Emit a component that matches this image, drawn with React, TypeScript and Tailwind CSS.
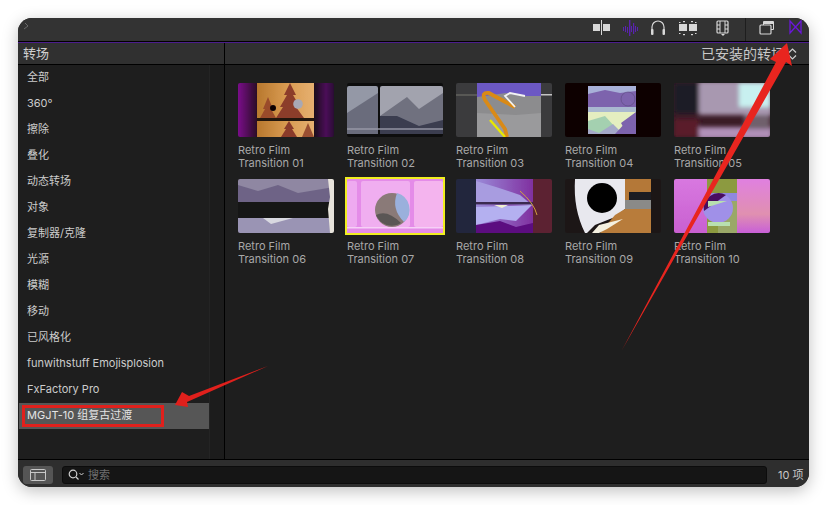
import React from "react";

const cats = ["全部","360°","擦除","叠化","动态转场","对象","复制器/克隆","光源","模糊","移动","已风格化","funwithstuff Emojisplosion","FxFactory Pro","MGJT-10 组复古过渡"];

const Svg = ({ children }: { children: React.ReactNode }) => (
  <svg viewBox="0 0 96 54" className="block w-full h-full" preserveAspectRatio="none">
    <defs><filter id="soft" x="-5%" y="-5%" width="110%" height="110%"><feGaussianBlur stdDeviation="0.45"/></filter></defs>
    <g filter="url(#soft)">{children}</g>
  </svg>
);

const T1 = () => (<Svg>
  <defs>
    <linearGradient id="a1" x1="0" x2="1"><stop offset="0" stopColor="#b8782e"/><stop offset=".5" stopColor="#d89a50"/><stop offset="1" stopColor="#e6b070"/></linearGradient>
    <linearGradient id="l1" x1="0" x2="1"><stop offset="0" stopColor="#7a0a8a"/><stop offset="1" stopColor="#2a0a26"/></linearGradient>
    <linearGradient id="r1" x1="0" x2="1"><stop offset="0" stopColor="#1a0a18"/><stop offset=".6" stopColor="#4a0a58"/><stop offset="1" stopColor="#2a0834"/></linearGradient>
  </defs>
  <rect width="96" height="54" fill="#2a0a30"/>
  <rect x="0" width="19" height="54" fill="url(#l1)"/><rect x="76" width="20" height="54" fill="url(#r1)"/>
  <rect x="19" width="57" height="54" fill="url(#a1)"/>
  <path d="M52 0 L58 12 L55 12 L62 24 L58 24 L66 35 L38 35 L45 24 L42 24 L49 12 L46 12Z" fill="#8c3c2c"/>
  <path d="M30 14 L35 26 L33 26 L38 35 L22 35 L27 26 L25 26Z" fill="#9a4c2c"/>
  <path d="M51 38 L56 46 L54 46 L59 54 L43 54 L48 46 L46 46Z" fill="#8a3a2c"/>
  <path d="M70 40 L76 54 L64 54Z" fill="#9a5030"/>
  <rect x="19" y="35" width="57" height="3" fill="#24120e"/>
  <circle cx="35" cy="25" r="3" fill="#0a0505"/><circle cx="60" cy="21" r="4.8" fill="#a8a8b4"/>
</Svg>);
const T2 = () => (<Svg>
  <rect width="96" height="54" fill="#0c0c10"/>
  <rect x="0" y="3" width="31" height="48" rx="2" fill="#9498a6"/><rect x="33" y="3" width="63" height="48" rx="2" fill="#a2a3ae"/>
  <path d="M0 30 L31 10 L31 51 L0 51Z" fill="#6a6c7c"/>
  <path d="M33 33 L60 14 L72 26 L96 10 L96 51 L33 51Z" fill="#70717f"/>
  <path d="M33 33 L50 33 L72 43 L96 37 L96 51 L33 51Z" fill="#3a3c50"/>
  <rect x="0" y="45" width="96" height="2" fill="#9a9aa8" opacity=".7"/>
</Svg>);
const T3 = () => (<Svg>
  <rect width="96" height="54" fill="#3b3b3d"/>
  <rect x="21" width="64" height="54" fill="#8c8c8e"/>
  <path d="M21 0 H85 V13 H66 L50 10 L21 14Z" fill="#6c58c4"/>
  <path d="M21 30 L60 32 L85 30 V54 H21Z" fill="#9a9a9c"/>
  <rect x="0" y="11.5" width="21" height="1" fill="#77776f"/>
  <rect x="85" y="11" width="11" height="1.5" fill="#c4c4c4"/>
  <path d="M59 24 Q40 14 33 10 Q25 9 29 17 L49 46 L51 54" fill="none" stroke="#d98a18" strokeWidth="3.8" strokeLinejoin="round"/>
  <path d="M59 24 L49 13 L54 10 L69 13" fill="none" stroke="#f2f2f2" strokeWidth="1.8"/>
  <path d="M34 37 L49 54" fill="none" stroke="#e8e800" strokeWidth="2.4"/>
</Svg>);
const T4 = () => (<Svg>
  <rect width="96" height="54" fill="#0a0205"/>
  <rect x="23" y="3" width="48" height="48" rx="4" fill="#7d63ad"/>
  <path d="M23 3 H71 V8 L55 10 L40 7 L23 11Z" fill="#a8b0d8"/>
  <rect x="23" y="24" width="48" height="5" fill="#a9b8d0"/>
  <path d="M23 29 H71 L56 40 L62 51 H23Z" fill="#e4eec0"/>
  <path d="M23 38 L40 33 L50 44 L38 51 H23Z" fill="#a4d0b0"/>
  <path d="M23 51 V46 L34 50 L48 41 L58 51Z" fill="#a4a8c8"/>
  <path d="M50 51 L62 38 L71 44 V51Z" fill="#7d63ad"/>
  <circle cx="63" cy="16" r="7" fill="none" stroke="#5a4a80" strokeWidth=".6"/>
</Svg>);
const T5 = () => (<Svg>
  <defs><filter id="b5"><feGaussianBlur stdDeviation="2"/></filter></defs>
  <rect width="96" height="54" fill="#3a1a26"/>
  <g filter="url(#b5)">
    <rect x="0" y="36" width="25" height="18" fill="#5a1a2a"/>
    <rect x="25" y="-2" width="73" height="34" fill="#a898b0"/>
    <rect x="65" y="0" width="31" height="24" fill="#c8f0f0"/>
    <rect x="25" y="44" width="73" height="12" fill="#b090b8"/>
    <rect x="70" y="32" width="26" height="14" fill="#70606c"/>
    <rect x="0" y="0" width="25" height="30" fill="#1c1c28"/>
  </g>
</Svg>);
const T6 = () => (<Svg>
  <rect width="96" height="54" fill="#181414"/>
  <rect y="0" width="96" height="23" fill="#6e6486"/>
  <path d="M0 0 H96 V8 L60 14 L40 6 L20 12 L0 6Z" fill="#8f87a2"/>
  <rect y="39" width="96" height="15" fill="#9a94b4"/>
  <path d="M25 39 H55 L33 45Z" fill="#d8d8e0"/>
  <path d="M90 0 H96 V54 H92 L90 30 L92 18Z" fill="#e8e4dc"/>
</Svg>);
const T7 = () => (<Svg>
  <rect width="96" height="54" fill="#e48ce8"/>
  <rect x="14" y="2" width="49" height="46" rx="2" fill="#f0aef0"/>
  <rect x="67" y="2" width="29" height="46" rx="2" fill="#f4b4ee"/>
  <rect x="0" y="2" width="10" height="46" rx="2" fill="#eeaaf0"/>
  <rect x="0" y="48" width="96" height="1.5" fill="#f6d0f6"/>
  <circle cx="45" cy="31" r="17" fill="#8a7a78"/>
  <path d="M50 14 A17 17 0 0 1 57 43 Q44 30 50 14Z" fill="#9ab0dc"/>
  <path d="M29 36 Q40 30 54 44 A17 17 0 0 1 29 36Z" fill="#5a5654"/>
</Svg>);
const T8 = () => (<Svg>
  <defs><linearGradient id="g8" x1="0" x2="1"><stop offset="0" stopColor="#9a8ad8"/><stop offset="1" stopColor="#8030a0"/></linearGradient></defs>
  <rect width="96" height="54" fill="#20283c"/>
  <rect x="76" width="20" height="54" fill="#5c2030"/>
  <rect x="20" width="57" height="54" fill="url(#g8)"/>
  <path d="M20 2 L40 8 L64 16 L76 26 L20 24Z" fill="#a89ce0"/>
  <path d="M20 28 L76 26 L60 42 L44 40 L20 46Z" fill="#b4b0f0"/>
  <path d="M20 46 L44 42 L60 48 L77 44 V54 H20Z" fill="#5c0c80"/>
  <rect x="20" y="23" width="57" height="2.4" fill="#3a2a50"/>
  <path d="M38 26 H52 L46 29Z" fill="#f0f0d0"/>
  <path d="M64 12 Q78 24 81 36" fill="none" stroke="#d0a040" strokeWidth="1"/>
</Svg>);
const T9 = () => (<Svg>
  <rect width="96" height="54" fill="#1a1214"/>
  <path d="M10 0 H60 V30 L50 38 L30 46 L22 54 H20 Q8 30 10 0Z" fill="#e8e8ee"/>
  <rect x="60" width="26" height="54" fill="#b47838"/>
  <path d="M35 54 L50 36 L60 30 H86 V54Z" fill="#b87c3a"/>
  <path d="M27 54 L34 46 L58 40 L42 50 L34 54Z" fill="#f4f0e0"/>
  <rect x="64" y="13" width="22" height="8" fill="#1c1c20"/>
  <rect x="60" y="21" width="26" height="9" fill="#8a8a88"/>
  <circle cx="37" cy="19" r="15" fill="#020204"/>
</Svg>);
const T10 = () => (<Svg>
  <defs><linearGradient id="g10" x1="0" y1="0" x2="0" y2="1"><stop offset="0" stopColor="#d878e0"/><stop offset="1" stopColor="#c860d0"/></linearGradient>
  <linearGradient id="r10" x1="0" y1="0" x2="0" y2="1"><stop offset="0" stopColor="#e080e0"/><stop offset=".65" stopColor="#e090b0"/><stop offset="1" stopColor="#c860d8"/></linearGradient></defs>
  <rect width="96" height="54" fill="url(#g10)"/>
  <rect x="63" width="33" height="54" fill="url(#r10)"/>
  <rect x="33" width="30" height="54" fill="#8c9a40"/>
  <rect x="33" y="14" width="30" height="8" fill="#9088e0"/>
  <rect x="44" y="22" width="19" height="32" fill="#9aa868"/>
  <circle cx="44" cy="29" r="15" fill="#a090e8"/>
  <path d="M30 32 A15 15 0 0 1 52 16 L30 32Z" fill="#4a1060"/>
  <path d="M34 22 H53 L34 28Z" fill="#b8e0b0"/>
  <rect x="34" y="43" width="22" height="4" fill="#b8e0b0"/>
</Svg>);

const thumbs = [T1,T2,T3,T4,T5,T6,T7,T8,T9,T10];

export default function App() {
  return (
    <div className="relative w-[827px] h-[505px] bg-white overflow-hidden p-[18px] pb-0 font-['Inter','Noto_Sans_CJK_SC',sans-serif]">
      <div className="w-[791px] h-[469px] rounded-[14px] overflow-hidden flex flex-col bg-[#1e1e1e] shadow-[0_4px_16px_rgba(0,0,0,0.25)]">
        <div className="h-[23px] bg-[#333333] flex items-center justify-between">
          <svg width="16" height="23" viewBox="0 0 16 23" className="shrink-0"><path d="M6 11 L10 8 L7 5" fill="none" stroke="#6a6a6a" strokeWidth="1"/></svg>
          <svg width="230" height="23" viewBox="0 0 230 23" className="shrink-0">
            <g fill="#d8d8d8">
              <rect x="14" y="6" width="7" height="7"/><rect x="24" y="6" width="7" height="7"/><rect x="22" y="2" width="1" height="15"/>
            </g>
            <g fill="#5a22b0">
              <rect x="44" y="9" width="1" height="4"/><rect x="46" y="8" width="1" height="6"/><rect x="48" y="9" width="1" height="6"/><rect x="50" y="2" width="1.4" height="16"/><rect x="52" y="8" width="1" height="6"/><rect x="54" y="5" width="1.2" height="11"/><rect x="56" y="8" width="1" height="6"/><rect x="58" y="9" width="1" height="4"/>
            </g>
            <g transform="translate(8,0)">
              <path d="M65 15 V9 A6 6 0 0 1 77 9 V15" fill="none" stroke="#d8d8d8" strokeWidth="1.2"/>
              <rect x="64" y="11" width="2.5" height="6" rx="1" fill="#d8d8d8"/><rect x="75.5" y="11" width="2.5" height="6" rx="1" fill="#d8d8d8"/>
            </g>
            <g fill="#d8d8d8" transform="translate(16,1)">
              <rect x="84" y="5" width="8" height="7"/><rect x="94" y="5" width="8" height="7"/>
              <rect x="88" y="2" width="2" height="1.2"/><rect x="96" y="2" width="2" height="1.2"/><rect x="88" y="15" width="2" height="1.2"/><rect x="96" y="15" width="2" height="1.2"/>
              <rect x="84" y="3" width="1.5" height="1"/><rect x="100" y="3" width="1.5" height="1"/><rect x="84" y="14" width="1.5" height="1"/><rect x="100" y="14" width="1.5" height="1"/>
            </g>
            <g transform="translate(14,0)">
              <rect x="124" y="3" width="11" height="12" rx="1" fill="none" stroke="#d8d8d8" strokeWidth="1.2"/>
              <path d="M127 3 V15 M132 3 V15 M124 7 H127 M124 11 H127 M132 7 H135 M132 11 H135" stroke="#d8d8d8" strokeWidth="1"/>
              <path d="M128 16 L130 18 L132 16Z" fill="#d8d8d8"/>
            </g>
            <rect x="166" y="0" width="1" height="23" fill="#1e1e1e"/>
            <rect x="184" y="3" width="11" height="9" rx="1" fill="#d8d8d8"/><rect x="185" y="6" width="9" height="5" fill="#333"/>
            <rect x="181" y="7" width="11" height="9" rx="1" fill="#333" stroke="#d8d8d8" strokeWidth="1.2"/>
            <path d="M211 3 L222 15 V3 L211 15Z" fill="none" stroke="#6a16d8" strokeWidth="1.3"/>
          </svg>
        </div>
        <div className="h-px bg-black"/>
        <div className="h-px bg-[#4b1d8c]"/>
        <div className="h-[21px] bg-[#303030] flex text-[#cfcfcf] text-[13px] leading-[21px]">
          <div className="w-[207px] pl-[5px] border-r border-black">转场</div>
          <div className="flex-1 flex justify-end items-center pr-[12px] gap-[3px]">
            <span className="text-[14px] leading-[21px] text-[#c8c8c8]">已安装的转场</span>
            <svg width="9" height="12" viewBox="0 0 9 12"><path d="M1 4.5 L4.5 1 L8 4.5 M1 7.5 L4.5 11 L8 7.5" fill="none" stroke="#cfcfcf" strokeWidth="1.2"/></svg>
          </div>
        </div>
        <div className="h-px bg-black"/>
        <div className="flex-1 flex min-h-0">
          <div className="w-[207px] flex border-r border-black">
            <div className="w-[191px] flex flex-col text-[11px] text-[#cccccc]">
              {cats.map((c, i) => (
                <div key={c} className={`h-[26px] shrink-0 leading-[25px] pl-[8px] whitespace-nowrap ml-px ${i === 13 ? "bg-[#565656] text-[#e4e4e4]" : ""}`}>{c}</div>
              ))}
            </div>
            <div className="flex-1 bg-[#1c1c1c] border-l border-[#242424]"/>
          </div>
          <div className="flex-1 pl-[13px] pt-[18px]">
            <div className="grid grid-cols-[repeat(5,109px)] auto-rows-[96px]">
              {thumbs.map((T, i) => (
                <div key={i} className="w-[96px]">
                  <div className={`h-[54px] w-[96px] overflow-hidden ${i === 6 ? "outline-2 outline-[#f0ee20]" : "rounded-[2px]"}`}><T/></div>
                  <div className="mt-[7px] text-[11px] leading-[13px] text-[#a8a8a8] whitespace-nowrap">Retro Film<br/>Transition {String(i + 1).padStart(2, "0")}</div>
                </div>
              ))}
            </div>
          </div>
        </div>
        <div className="h-px bg-black"/>
        <div className="h-[27px] bg-[#2e2e2e] flex items-center pl-[5px] pr-[5px] pt-[3px]">
          <div className="w-[30px] h-[18px] rounded-[3px] bg-[#555555] flex items-center justify-center">
            <svg width="16" height="12" viewBox="0 0 16 12"><rect x=".5" y=".5" width="15" height="11" rx="1" fill="none" stroke="#c8c8c8"/><path d="M.5 3.5 H15.5 M5 3.5 V11.5" stroke="#c8c8c8"/></svg>
          </div>
          <div className="ml-[9px] w-[705px] h-[18px] rounded-[3px] bg-[#151515] border border-[#0c0c0c] flex items-center pl-[5px]">
            <svg width="17" height="12" viewBox="0 0 17 12"><circle cx="5" cy="5" r="3.8" fill="none" stroke="#d0d0d0" strokeWidth="1.2"/><path d="M8 8 L10.5 10.5" stroke="#d0d0d0" strokeWidth="1.2"/><path d="M11.5 4 L13.5 6 L15.5 4" fill="none" stroke="#d0d0d0"/></svg>
            <span className="ml-[3px] text-[11px] text-[#6e6e6e]">搜索</span>
          </div>
          <span className="ml-[11px] text-[11px] text-[#c8c8c8] whitespace-nowrap">10 项</span>
        </div>
      </div>

      <div className="absolute left-[22px] top-[405px] w-[142px] h-[22px] border-[3px] border-[#e0201c]"/>
      <svg className="absolute left-0 top-0 pointer-events-none" width="827" height="505" viewBox="0 0 827 505">
        <path d="M268 366 L189 396 L182 392 L175 405 L188 407 L187 402Z" fill="#e0201c"/>
        <path d="M622 350 L776 62 L770 59 L787 43 L792 66 L786 62Z" fill="#e8251f"/>
      </svg>
    </div>
  );
}
